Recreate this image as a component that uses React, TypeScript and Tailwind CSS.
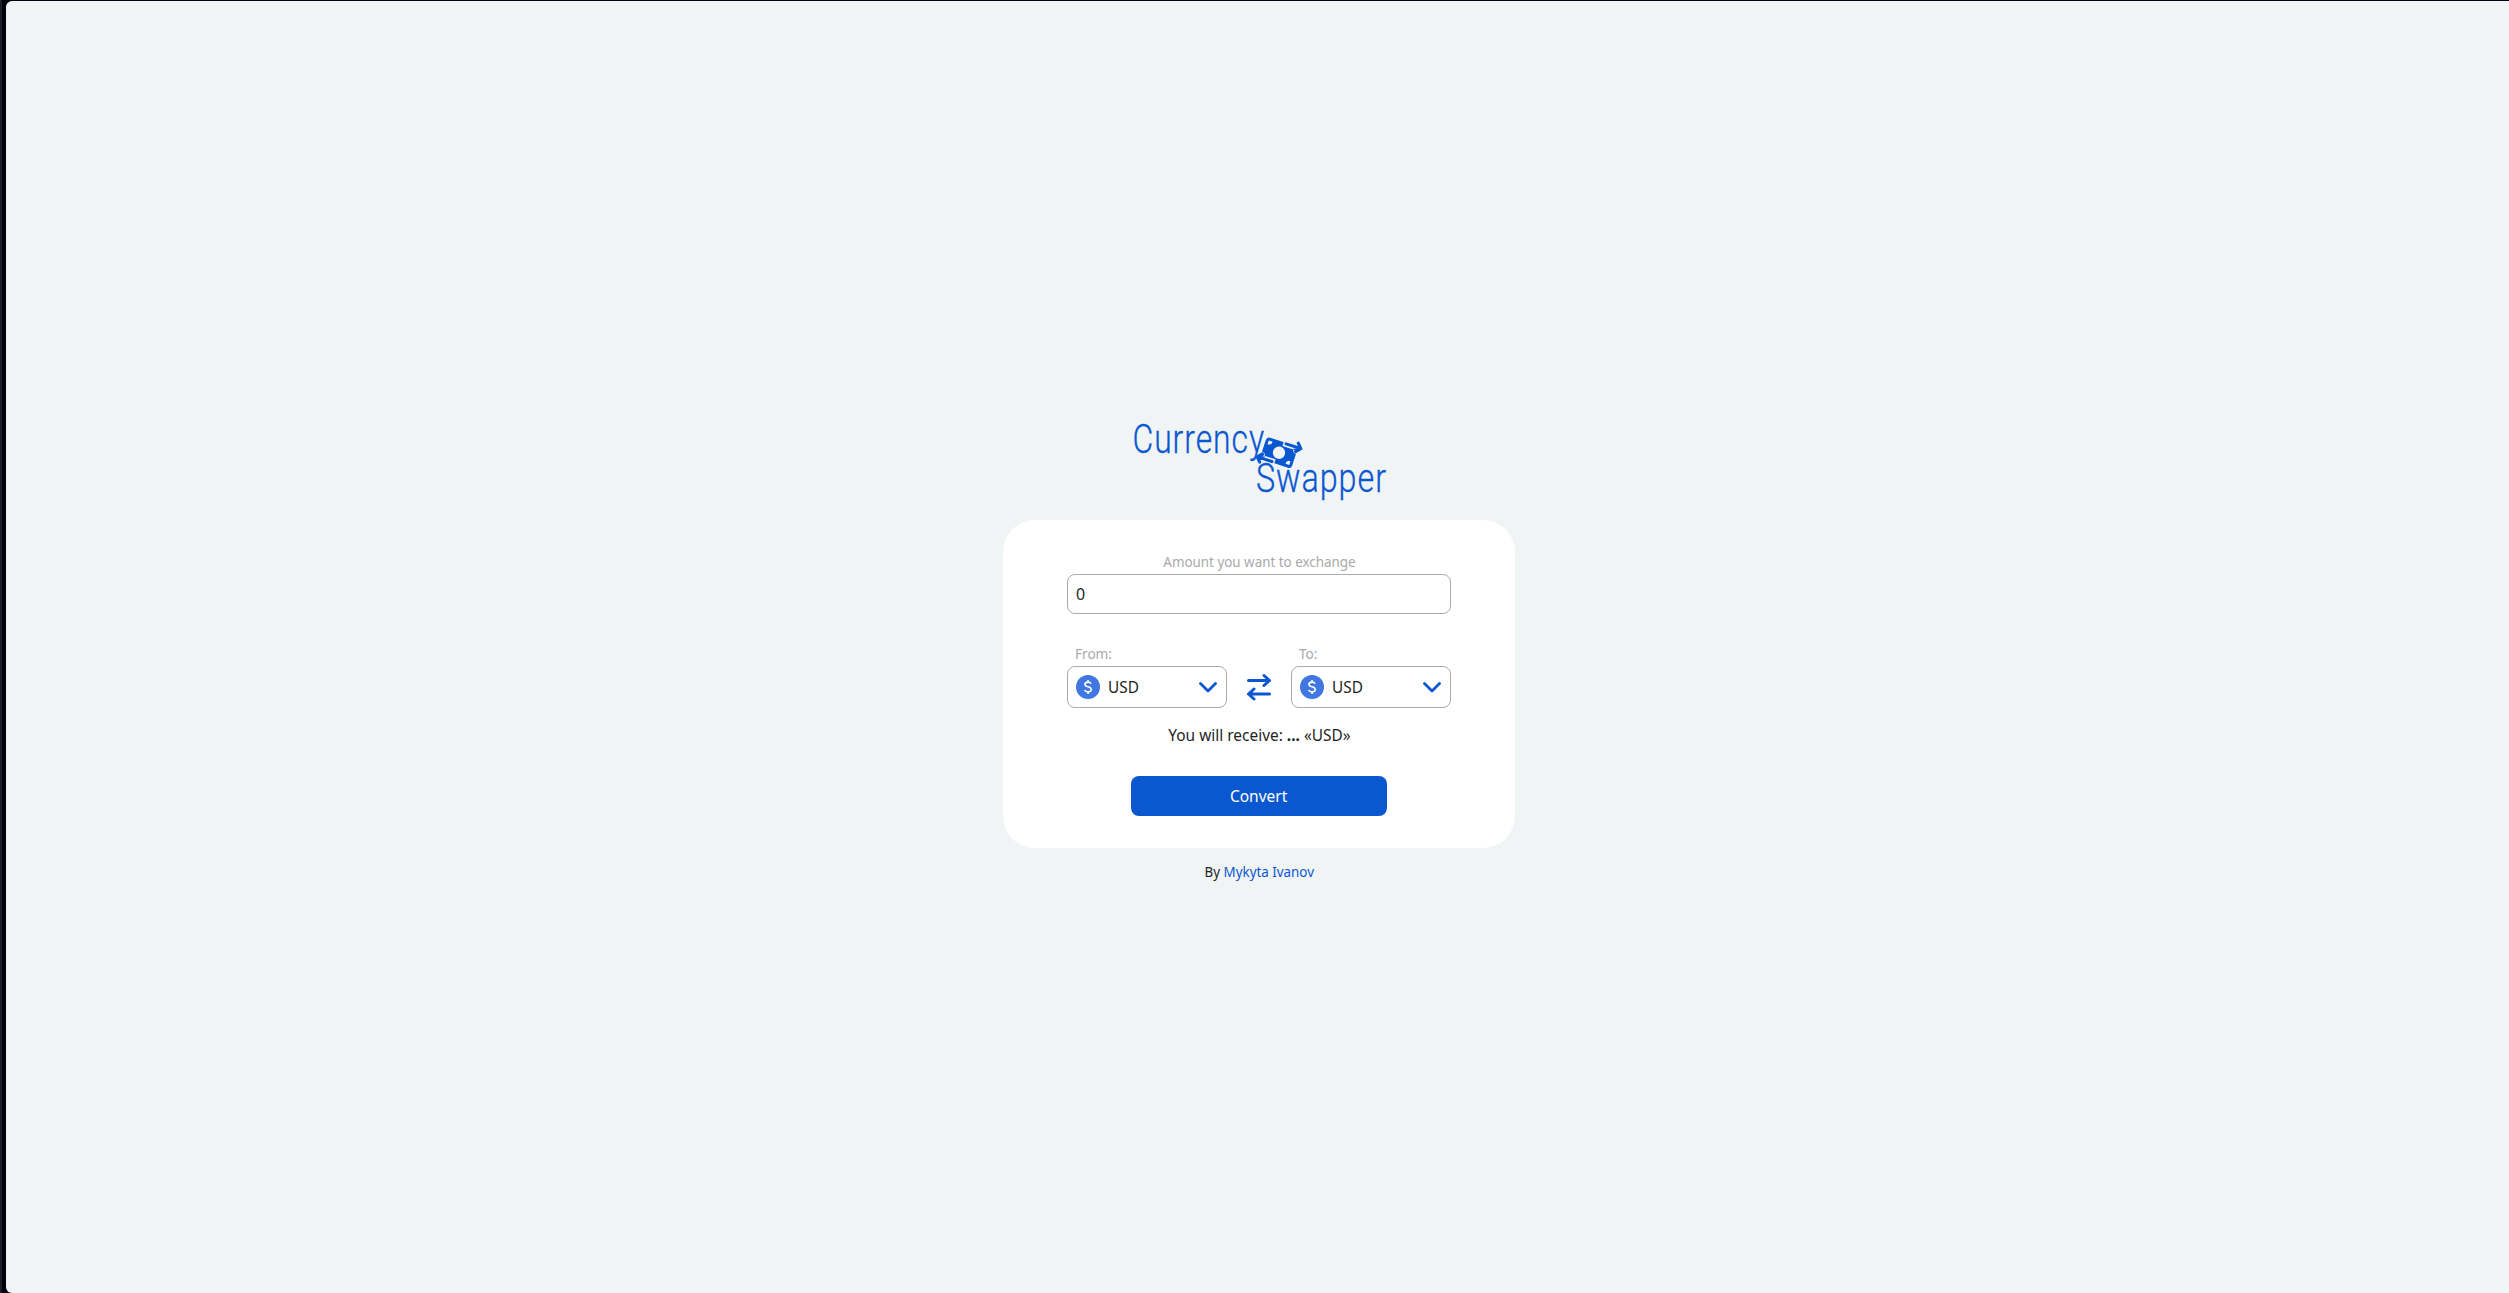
import React, { useState } from "react";

function Logo() {
  return (
    <svg
      className="block h-[80px] w-[256px] overflow-visible"
      viewBox="0 0 256 80"
      fill="#0b57d0"
      fontFamily="Roboto, 'Liberation Sans', sans-serif"
      fontWeight={300}
      fontSize={40}
      role="img"
      aria-label="Currency Swapper"
    >
      <g transform="translate(148 31.7) rotate(18)">
        <rect x="-16.5" y="-11.5" width="33" height="23" rx="3.5" />
        <circle r="6.2" fill="#f0f4f5" />
        <path d="M-13.5 -4.5V-8.5H-9.5A4 4 0 0 1 -13.5 -4.5ZM13.5 4.5V8.5H9.5A4 4 0 0 1 13.5 4.5Z" fill="#f0f4f5" />
        <path d="M1.2 -15H20V-7.4H1.2ZM-1.2 15H-20V7.4H-1.2ZM12 -8L14 -4.5L17 -4V-10ZM-12 8L-14 4.5L-17 4V10Z" fill="#f0f4f5" />
        <path
          d="M4 -10.6H19.3M15.4 -15L19.5 -10.6L15.4 -6.2M-4 10.6H-19.3M-15.4 6.2L-19.5 10.6L-15.4 15"
          fill="none"
          stroke="#0b57d0"
          strokeWidth="3.1"
          strokeLinecap="round"
          strokeLinejoin="round"
        />
      </g>
      <g stroke="#0b57d0" strokeWidth="0.3" letterSpacing="1.2">
        <text x="1.5" y="32" textLength="132.5" lengthAdjust="spacingAndGlyphs">
          Currency
        </text>
        <text x="125" y="71" textLength="131" lengthAdjust="spacingAndGlyphs">
          Swapper
        </text>
      </g>
    </svg>
  );
}

function CurrencySelect({ label, code }: { label: string; code: string }) {
  return (
    <div className="w-40">
      <div className="h-5 pl-[7.5px] text-[14px] leading-5 text-[#aaaaaa]">
        <span className="inline-block origin-left scale-x-[0.97]">{label}</span>
      </div>
      <button
        type="button"
        className="mt-0.5 flex h-[42px] w-full items-center rounded-lg border border-[#aaaaaa] pr-[9px] pl-2"
      >
        <svg className="size-6" viewBox="0 0 24 24">
          <circle cx="12" cy="12" r="12" fill="#4177e3" />
          <path
            d="M15 8.6C14.6 7.6 13.5 7.1 12 7.1C10.2 7.1 9 7.9 9 9.4C9 12.6 15.2 11 15.2 14.4C15.2 16 13.8 16.9 12 16.9C10.3 16.9 9.1 16.2 8.7 15M12 5V7M12 17V19"
            fill="none"
            stroke="#fff"
            strokeWidth="1.6"
          />
        </svg>
        <span className="ml-2 inline-block origin-left scale-x-[0.96] text-[16px] leading-6">{code}</span>
        <svg
          className="ml-auto h-[11px] w-[18px]"
          viewBox="0 0 18 11"
          fill="none"
          stroke="#0b57d0"
          strokeWidth="2.8"
          strokeLinecap="round"
          strokeLinejoin="round"
        >
          <path d="M1.5 1.5L9 9L16.5 1.5" />
        </svg>
      </button>
    </div>
  );
}

export default function App() {
  const [amount, setAmount] = useState("0");
  return (
    <div className="h-screen overflow-hidden border-l-2 border-[#1c1e28] bg-[#02020f] pt-px pl-1 font-['Noto_Sans',sans-serif] text-[#1f1f1f]">
      <div className="flex h-full flex-col items-center rounded-l-[6px] bg-[#f0f4f5] pt-[420px] pl-[3px]">
        <Logo />
        <main className="mt-[19px] flex h-[328px] w-[512px] flex-col items-center rounded-[32px] bg-[#fefffe] px-16">
          <label className="mt-8 h-[22px] text-[14px] leading-5 text-[#aaaaaa]">
            <span className="inline-block scale-x-[0.957]">Amount you want to exchange</span>
          </label>
          <input
            className="h-10 w-full rounded-lg border border-[#aaaaaa] bg-transparent px-2 text-[16px] outline-none"
            value={amount}
            onChange={(e) => setAmount(e.target.value)}
          />
          <div className="mt-[30px] flex w-full items-end justify-between">
            <CurrencySelect label="From:" code="USD" />
            <svg
              className="mb-[7px] h-[28px] w-6"
              viewBox="0 0 24 28"
              fill="none"
              stroke="#0b57d0"
              strokeWidth="3"
              strokeLinecap="round"
              strokeLinejoin="round"
            >
              <path d="M1.5 7.5H22.5M17 2.5L22.5 7.5L17 12.5M22.5 21H1.5M7 16L1.5 21L7 26" />
            </svg>
            <CurrencySelect label="To:" code="USD" />
          </div>
          <p className="mt-[15px] h-6 scale-x-[0.965] text-[16px] leading-6 whitespace-nowrap">
            You will receive: <b>...</b> «USD»
          </p>
          <button type="button" className="mt-[29px] h-10 w-64 shrink-0 rounded-lg bg-[#0b57d0] text-[16px] leading-6 text-white">
            <span className="inline-block scale-x-[0.97]">Convert</span>
          </button>
        </main>
        <footer className="mt-[14px] scale-x-[0.955] text-[14px] leading-5 whitespace-nowrap">
          By <a className="text-[#0b57d0]">Mykyta Ivanov</a>
        </footer>
      </div>
    </div>
  );
}
